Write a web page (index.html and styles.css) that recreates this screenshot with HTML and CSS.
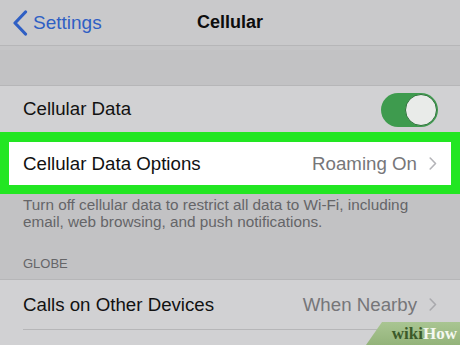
FILE: index.html
```html
<!DOCTYPE html>
<html>
<head>
<meta charset="utf-8">
<link rel="stylesheet" href="styles.css">
</head>
<body>
<div class="screen">
  <header class="nav">
    <div class="back">
      <svg class="back-icon" width="16" height="26" viewBox="0 0 16 26"><path d="M13.5 2 L3 13 L13.5 24" fill="none" stroke="#2f5fc4" stroke-width="3.2" stroke-linecap="round" stroke-linejoin="round"/></svg>
      <span class="back-label">Settings</span>
    </div>
    <div class="title">Cellular</div>
    <div></div>
  </header>
  <div class="spacer"></div>
  <div class="cell row-data">
    <span class="label">Cellular Data</span>
    <span class="toggle"><span class="knob"></span></span>
  </div>
  <div class="highlight">
    <span class="label">Cellular Data Options</span>
    <span class="value">Roaming On<svg class="chev" width="8" height="13" viewBox="0 0 8 13"><path d="M1.2 1 L6.5 6.5 L1.2 12" fill="none" stroke="#b4b4b8" stroke-width="1.6" stroke-linecap="round" stroke-linejoin="round"/></svg></span>
  </div>
  <div class="footer">
    <p class="note">Turn off cellular data to restrict all data to Wi-Fi, including email, web browsing, and push notifications.</p>
    <div class="section-head">GLOBE</div>
  </div>
  <div class="group">
    <div class="cell">
      <div class="cell-body">
        <span class="label">Calls on Other Devices</span>
        <span class="value">When Nearby<svg class="chev" width="8" height="13" viewBox="0 0 8 13"><path d="M1.2 1 L6.5 6.5 L1.2 12" fill="none" stroke="#a9a9ad" stroke-width="1.6" stroke-linecap="round" stroke-linejoin="round"/></svg></span>
      </div>
    </div>
    <div class="cell rest"></div>
  </div>
  <div class="wikihow"><span class="wiki">wiki</span><span class="how">How</span></div>
</div>
</body>
</html>
```
FILE: styles.css
```css
* { box-sizing: border-box; }
html, body { margin: 0; padding: 0; }
body {
  width: 460px;
  height: 345px;
  overflow: hidden;
  background: #c2c2c4;
  font-family: "Liberation Sans", Arial, sans-serif;
  color: #111;
}
.screen {
  position: relative;
  width: 460px;
  height: 345px;
  overflow: hidden;
}
.nav {
  height: 46px;
  display: grid;
  grid-template-columns: 1fr auto 1fr;
  align-items: center;
  background: #c9c9cb;
  border-bottom: 1px solid #b6b6b8;
}
.back {
  display: flex;
  align-items: center;
  padding-left: 12px;
  color: #2f5fc4;
}
.back-icon { display: block; }
.back-label {
  margin-left: 5px;
  font-size: 19px;
  line-height: 22px;
}
.title {
  font-size: 18px;
  font-weight: bold;
  color: #0d0d0d;
}
.spacer {
  height: 40px;
  border-top: 4px solid #c5c5c7;
  border-bottom: 1px solid #b6b6b8;
}
.cell {
  display: flex;
  align-items: center;
  justify-content: space-between;
  background: #d1d1d3;
  padding: 0 22px 0 23px;
}
.label {
  font-size: 18.7px;
  color: #111;
}
.value {
  display: flex;
  align-items: center;
  gap: 12px;
  font-size: 18.7px;
  color: #767679;
}
.chev { display: block; }
.row-data { height: 46px; }
.toggle {
  display: flex;
  justify-content: flex-end;
  align-items: center;
  width: 57px;
  height: 34px;
  border-radius: 17px;
  background: #3e9b4e;
  padding: 1px;
  margin-top: 2px;
}
.knob {
  width: 32px;
  height: 32px;
  border-radius: 50%;
  background: #e9ebe9;
  border: 1.5px solid #2c7239;
}
.highlight {
  height: 62px;
  background: #fff;
  border: solid #22e622;
  border-width: 10px 9px 9px 9px;
  display: flex;
  align-items: center;
  justify-content: space-between;
  padding: 0 14px 0 14px;
}
.footer {
  height: 85px;
  padding: 2px 23px 0 23px;
}
.note {
  margin: 0;
  font-size: 15.3px;
  line-height: 17px;
  color: #656568;
}
.section-head {
  margin-top: 25px;
  font-size: 13px;
  line-height: 17px;
  color: #656568;
}
.group {
  border-top: 1px solid #b6b6b8;
}
.group .cell { padding-right: 0; }
.cell-body {
  flex: 1;
  height: 50px;
  display: flex;
  align-items: center;
  justify-content: space-between;
  padding-right: 23px;
  border-bottom: 1px solid #b6b6b8;
}
.rest { height: 20px; }
.wikihow {
  position: absolute;
  right: 0;
  bottom: 0;
  width: 94px;
  height: 23px;
  background: linear-gradient(#a9c592, #93b37a);
  clip-path: polygon(16px 0, 100% 0, 100% 100%, 0 100%);
  display: flex;
  align-items: center;
  justify-content: flex-end;
  padding-right: 3px;
  font-family: "Liberation Serif", "DejaVu Serif", serif;
  font-weight: bold;
  font-size: 17px;
  line-height: 23px;
}
.wiki { color: #3b5a2a; }
.how { color: #f4f8f0; }
```
